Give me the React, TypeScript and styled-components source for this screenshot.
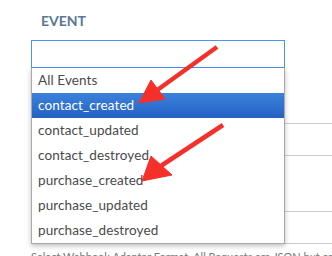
import styled, { createGlobalStyle } from "styled-components";

const GlobalStyle = createGlobalStyle`
  html, body {
    margin: 0;
    padding: 0;
    background: #fff;
    overflow: hidden;
  }
  body {
    font-family: Lato, "Open Sans", Arial, sans-serif;
  }
`;

const Page = styled.div`
  position: relative;
  width: 332px;
  height: 256px;
  overflow: hidden;
  padding: 13px 0 0 31px;
  box-sizing: border-box;
`;

const Label = styled.div`
  margin-left: 10px;
  font-size: 14px;
  font-weight: 700;
  line-height: 16px;
  color: #5a7795;
`;

const SelectWrap = styled.div`
  position: relative;
  margin-top: 11px;
  width: 254px;
`;

const SearchBox = styled.div`
  height: 28px;
  box-sizing: border-box;
  border: 1px solid #4d94ee;
  background: #fff;
`;

const List = styled.ul`
  position: absolute;
  top: 28px;
  left: 0;
  width: 254px;
  margin: 0;
  padding: 0;
  list-style: none;
  box-sizing: border-box;
  background: #fff;
  border: 1px solid #a9a9a9;
  border-top: none;
  box-shadow: 0 2px 5px rgba(0, 0, 0, 0.25);
  z-index: 2;
`;

const Option = styled.li<{ $active?: boolean }>`
  height: 25px;
  line-height: 25px;
  padding-left: 6px;
  font-size: 13.5px;
  letter-spacing: 0.1px;
  color: ${(p) => (p.$active ? "#fff" : "#4a4a4a")};
  background: ${(p) =>
    p.$active ? "linear-gradient(#3b82dc, #2461c2)" : "transparent"};
`;

const Field = styled.div<{ $top: number }>`
  margin-top: ${(p) => p.$top}px;
  width: 360px;
  height: 33px;
  box-sizing: border-box;
  border: 1px solid #cdcdcd;
  border-right: none;
`;

const Help = styled.div`
  margin-top: 6px;
  font-size: 11px;
  line-height: 14px;
  color: #777;
  white-space: nowrap;
`;

const Overlay = styled.svg`
  position: absolute;
  left: 0;
  top: 0;
  z-index: 5;
  pointer-events: none;
`;

const events = [
  "All Events",
  "contact_created",
  "contact_updated",
  "contact_destroyed",
  "purchase_created",
  "purchase_updated",
  "purchase_destroyed",
];

function Arrow({ from, corners, tip }: { from: [number, number]; corners: [number, number][]; tip: [number, number] }) {
  const mx = (corners[0][0] + corners[1][0]) / 2;
  const my = (corners[0][1] + corners[1][1]) / 2;
  return (
    <g fill="#f5302a" stroke="#f5302a">
      <line x1={from[0]} y1={from[1]} x2={mx} y2={my} strokeWidth={4.5} />
      <polygon
        points={`${corners[0][0]},${corners[0][1]} ${corners[1][0]},${corners[1][1]} ${tip[0]},${tip[1]}`}
        strokeWidth={1}
        strokeLinejoin="round"
      />
    </g>
  );
}

export default function App() {
  return (
    <>
      <GlobalStyle />
      <Page>
        <Label>EVENT</Label>
        <SelectWrap>
          <SearchBox />
          <List>
            {events.map((e) => (
              <Option key={e} $active={e === "contact_created"}>
                {e}
              </Option>
            ))}
          </List>
        </SelectWrap>
        <Field $top={55} />
        <Field $top={55} />
        <Help>Select Webhook Adapter Format. All Requests are JSON but can be customized</Help>
        <Overlay width="332" height="256" viewBox="0 0 332 256">
          <Arrow from={[217, 47]} corners={[[151, 80], [165, 99]]} tip={[139, 103]} />
          <Arrow from={[223, 125]} corners={[[151, 156], [172, 175]]} tip={[142, 181]} />
        </Overlay>
      </Page>
    </>
  );
}
